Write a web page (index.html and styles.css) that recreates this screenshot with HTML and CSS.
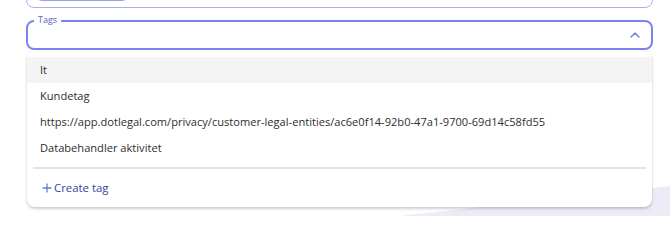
FILE: index.html
```html
<!DOCTYPE html>
<html lang="en">
<head>
<meta charset="utf-8">
<title>Tags</title>
<link rel="stylesheet" href="styles.css">
</head>
<body>
<div class="backdrop"></div>
<div class="page">
  <div class="field-top">
    <div class="chip"></div>
  </div>
  <div class="field-tags">
    <span class="legend">Tags</span>
    <svg class="chevron" width="12" height="8" viewBox="0 0 12 8"><path d="M2 6 L6 2.2 L10 6" fill="none" stroke="#7b83ee" stroke-width="1.6" stroke-linecap="round" stroke-linejoin="round"/></svg>
  </div>
  <div class="dropdown">
    <ul class="options">
      <li class="option active">It</li>
      <li class="option">Kundetag</li>
      <li class="option">https://app.dotlegal.com/privacy/customer-legal-entities/ac6e0f14-92b0-47a1-9700-69d14c58fd55</li>
      <li class="option">Databehandler aktivitet</li>
    </ul>
    <div class="divider"></div>
    <div class="create">
      <svg class="plus" width="10" height="10" viewBox="0 0 10 10"><path d="M5 0.5 V9.5 M0.5 5 H9.5" stroke="#6a7be0" stroke-width="1.3" fill="none"/></svg>
      <span>Create tag</span>
    </div>
  </div>
</div>
</body>
</html>
```

FILE: styles.css
```css
html, body {
  margin: 0;
  padding: 0;
  width: 670px;
  height: 216px;
  overflow: hidden;
  background: #ffffff;
  font-family: "Open Sans", "Noto Sans", sans-serif;
}

body {
  position: relative;
}

.backdrop {
  position: absolute;
  left: 0;
  top: 0;
  width: 670px;
  height: 216px;
  background: #ececf9;
  clip-path: polygon(400px 216px, 670px 186px, 670px 216px);
}

.page {
  position: relative;
  margin: -31px 17px 0 26px;
  display: flex;
  flex-direction: column;
}

.field-top {
  height: 37px;
  border: 1px solid #a9aff3;
  border-radius: 8px;
  padding: 0 8px;
  display: flex;
  align-items: flex-end;
}

.chip {
  width: 92px;
  height: 20px;
  margin-bottom: 6px;
  border: 1px solid #9aa1f0;
  border-radius: 7px;
  background: #f4f5fe;
}

.field-tags {
  position: relative;
  margin-top: 12px;
  height: 26px;
  border: 2px solid #7b83ee;
  border-radius: 8px;
  display: flex;
  align-items: center;
  justify-content: flex-end;
  padding-right: 10px;
}

.legend {
  position: absolute;
  top: -9px;
  left: 6px;
  padding: 0 4px;
  background: #ffffff;
  font-size: 9px;
  line-height: 13px;
  color: #5a63c8;
}

.chevron {
  display: block;
}

.dropdown {
  margin: 1px 1px 0 1px;
  background: #ffffff;
  border-radius: 8px;
  box-shadow: 0 2px 3px rgba(0, 0, 0, 0.18), 0 0 2px rgba(0, 0, 0, 0.08);
  padding-top: 6px;
  display: flex;
  flex-direction: column;
}

.options {
  list-style: none;
  margin: 0;
  padding: 0;
}

.option {
  height: 26px;
  line-height: 26px;
  padding-left: 13px;
  font-size: 11.1px;
  color: #2e2e2e;
  white-space: nowrap;
}

.option.active {
  background: #f4f4f4;
}

.divider {
  margin: 6px 6px 0 6px;
  height: 1.5px;
  background: #dfe5ec;
}

.create {
  height: 38px;
  display: flex;
  align-items: center;
  gap: 2px;
  padding-left: 15px;
  font-size: 11.4px;
  color: #34449a;
}

.plus {
  display: block;
}
```
